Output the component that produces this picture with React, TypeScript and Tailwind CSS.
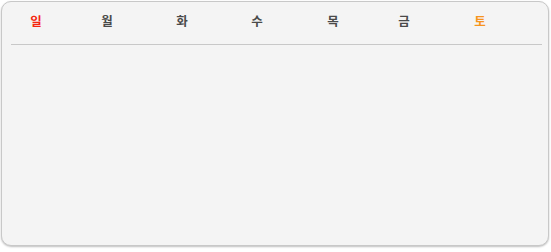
import React from "react";

const days = [
  { label: "일", cls: "text-[#f5260f]" },
  { label: "월", cls: "text-[#4a4a4a]" },
  { label: "화", cls: "text-[#4a4a4a]" },
  { label: "수", cls: "text-[#4a4a4a]" },
  { label: "목", cls: "text-[#4a4a4a]" },
  { label: "금", cls: "text-[#4a4a4a]" },
  { label: "토", cls: "text-[#f7941d]" },
];

export default function App() {
  return (
    <div className="w-[551px] h-[252px] bg-white pt-[1px] pl-[1px]">
      <div
        className="w-[548px] h-[245px] bg-[#f4f4f4] border border-[#c8c8c8] rounded-[10px] shadow-[0_1px_2px_rgba(0,0,0,0.25)] flex flex-col"
        style={{ fontFamily: '"Noto Sans CJK KR", "Noto Sans", sans-serif' }}
      >
        <div className="grid grid-cols-[68px_74px_76px_74px_78px_64px_88px] pt-[10px] h-[42px]">
          {days.map((d) => (
            <div key={d.label} className={`flex justify-center text-[12.5px] font-semibold leading-[18px] ${d.cls}`}>
              {d.label}
            </div>
          ))}
        </div>
        <div className="ml-[9px] mr-[6px] h-[1px] bg-[#c8c8c8]" />
      </div>
    </div>
  );
}
